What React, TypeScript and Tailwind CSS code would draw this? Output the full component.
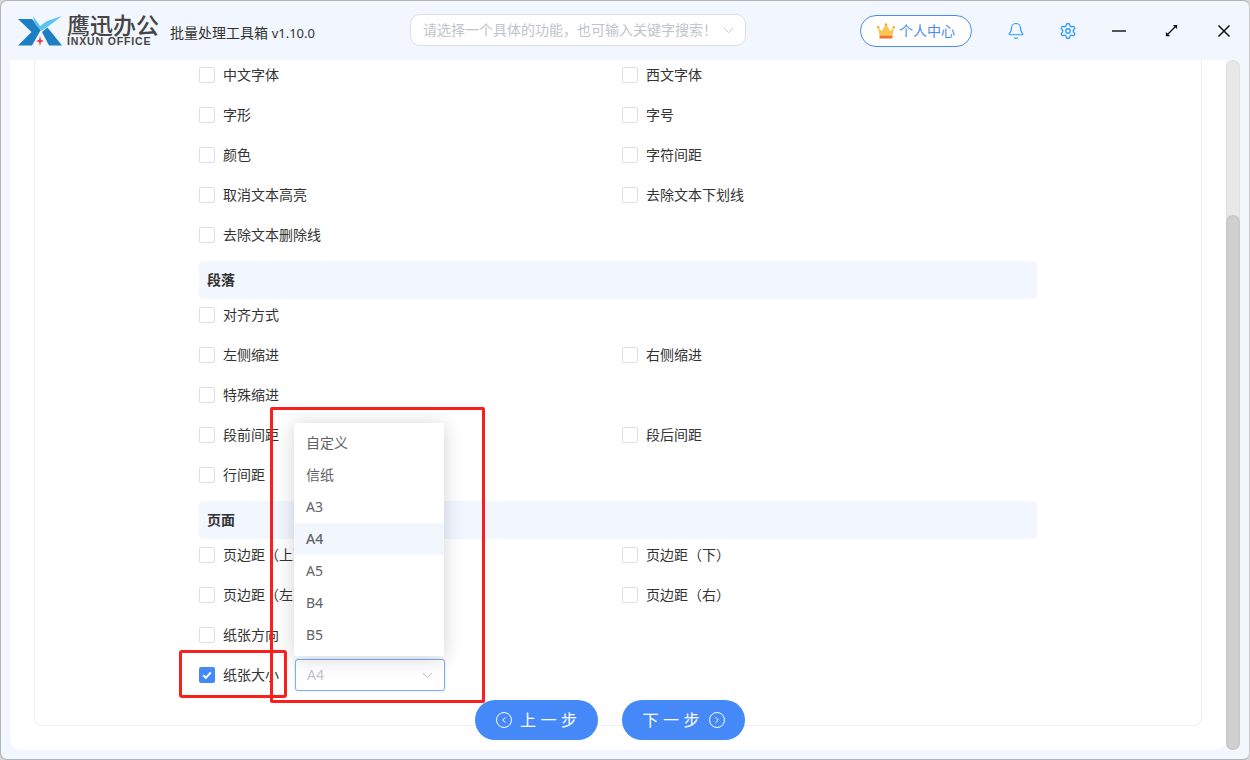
import React from "react";
import { Bell, Settings, ChevronDown, ChevronLeft, ChevronRight } from "lucide-react";

const font = "font-['Noto_Sans','Noto_Sans_CJK_SC',sans-serif]";

function Box({ checked }: { checked?: boolean }) {
  if (checked) {
    return (
      <span className="w-4 h-4 rounded-[2px] bg-[#4589f8] flex items-center justify-center shrink-0">
        <svg width="12" height="12" viewBox="0 0 12 12" fill="none">
          <path d="M2.2 6.2 L4.9 8.8 L9.8 3.4" stroke="#fff" strokeWidth="2" />
        </svg>
      </span>
    );
  }
  return <span className="w-4 h-4 rounded-[2px] border border-[#dcdfe6] bg-white shrink-0" />;
}

function Item({ label }: { label: string }) {
  return (
    <div className="flex items-center gap-2">
      <Box />
      <span className="text-[14px] text-[#333] mb-[2px]">{label}</span>
    </div>
  );
}

function Row({ a, b }: { a: string; b?: string }) {
  return (
    <div className="h-10 grid grid-cols-[423px_1fr] items-center">
      <Item label={a} />
      {b ? <Item label={b} /> : null}
    </div>
  );
}

function Section({ title }: { title: string }) {
  return (
    <div className="h-[38px] mt-[6px] -mb-1 w-[838px] bg-[#f2f6fe] rounded-[4px] flex items-center pl-2 relative z-0">
      <span className="text-[14px] font-bold text-[#333] mb-[2px]">{title}</span>
    </div>
  );
}

const options = ["自定义", "信纸", "A3", "A4", "A5", "B4", "B5"];

function Logo() {
  return (
    <div className="flex items-center">
      <svg width="44" height="32" viewBox="0 0 44 32" className="shrink-0">
        <path d="M0 4 H14 L23 14.5 L14 30.5 H0 L13.5 17 Z" fill="#1c7fc4" />
        <path d="M15 1 L22 11 L29 6 L44 1 L30 11.5 L23 16 L17 9 Z" fill="#5cc3ee" />
        <path d="M24 17 L29.5 12.5 L44 30.5 H31 Z" fill="#1c7fc4" />
        <path d="M22 21 L23 25 L26 26 L23 27 L22 31 L21 27 L18 26 L21 25 Z" fill="#e8343c" />
      </svg>
      <div className="ml-[5px] mb-[2px] flex flex-col w-[92px]">
        <span className="text-[23px] leading-[22px] font-medium text-[#454545] font-['Noto_Sans_CJK_SC',sans-serif]">鹰迅办公</span>
        <span className="text-[10.5px] leading-[10px] font-bold tracking-[0.85px] whitespace-nowrap text-[#454545] mt-[1px] font-['Liberation_Sans',sans-serif]">INXUN OFFICE</span>
      </div>
    </div>
  );
}

function Crown() {
  return (
    <svg width="18" height="16" viewBox="0 0 18 16" className="shrink-0">
      <path d="M1 4.5 L4.8 8 L9 1 L13.2 8 L17 4.5 L15.5 12.5 H2.5 Z" fill="#fcc64f" />
      <circle cx="1.2" cy="4.2" r="1.2" fill="#f5a623" />
      <circle cx="16.8" cy="4.2" r="1.2" fill="#f5a623" />
      <circle cx="9" cy="1.4" r="1.2" fill="#f5a623" />
      <rect x="2.5" y="12.5" width="13" height="3" fill="#f0712c" />
    </svg>
  );
}

export default function App() {
  return (
    <div className={`${font} relative w-[1250px] h-[760px] overflow-hidden bg-[#d8d8d8]`}>
      <div className="w-full h-full rounded-[7px] border border-[#b4b4b4] border-r-[#c8c8c8] bg-[#f2f6fe] flex flex-col">
        <header className="h-[59px] shrink-0 flex items-center pl-[17px]">
          <Logo />
          <span className="ml-[11px] mt-[5px] text-[14px] text-[#333] w-[146px] whitespace-nowrap">
            批量处理工具箱 <span className="text-[13px]">v1.10.0</span>
          </span>
          <div className="ml-[94px] w-[336px] h-8 bg-white border border-[#dcdfe6] rounded-[10px] flex items-center justify-between pl-3 pr-[8px] -mt-[1px]">
            <span className="text-[14px] text-[#c0c4cc] whitespace-nowrap mb-[2px]">请选择一个具体的功能，也可输入关键字搜索！</span>
            <ChevronDown size={17} strokeWidth={1.2} className="text-[#b8bcc4]" />
          </div>
          <button className="ml-[114px] w-28 h-8 rounded-full border border-[#4a8cf7] bg-white flex items-center justify-center gap-1 text-[14px] text-[#4a8cf7]">
            <Crown />
            <span className="mb-[1px]">个人中心</span>
          </button>
          <Bell size={18} strokeWidth={1.6} className="ml-[35px] text-[#2f9bff]" />
          <Settings size={18} strokeWidth={1.8} className="ml-[34px] text-[#2f9bff]" />
          <span className="ml-[35px] w-[14px] h-[2px] bg-[#555]" />
          <svg width="15" height="15" viewBox="0 0 16 16" className="ml-[38px]" fill="none">
            <path d="M3 13 L13 3" stroke="#111" strokeWidth="1.4" />
            <path d="M9.5 2 H14 V6.5 Z" fill="#111" />
            <path d="M2 9.5 V14 H6.5 Z" fill="#111" />
          </svg>
          <svg width="14" height="14" viewBox="0 0 14 14" className="ml-[38px]" fill="none">
            <path d="M1.5 1.5 L12.5 12.5 M12.5 1.5 L1.5 12.5" stroke="#111" strokeWidth="1.5" />
          </svg>
        </header>
        <div className="flex-1 flex min-h-0 pl-[9px] pb-[9px]">
          <main className="w-[1216px] bg-white rounded-bl-[10px] rounded-br-[10px] overflow-hidden pl-6 pr-6 pb-6">
            <div className="h-full border border-t-0 border-[#ebeef5] rounded-b-[8px] overflow-hidden pl-[164px]">
              <div className="-mt-[5px]">
                <Row a="中文字体" b="西文字体" />
                <Row a="字形" b="字号" />
                <Row a="颜色" b="字符间距" />
                <Row a="取消文本高亮" b="去除文本下划线" />
                <Row a="去除文本删除线" />
                <Section title="段落" />
                <Row a="对齐方式" />
                <Row a="左侧缩进" b="右侧缩进" />
                <Row a="特殊缩进" />
                <Row a="段前间距" b="段后间距" />
                <Row a="行间距" />
                <Section title="页面" />
                <Row a="页边距（上）" b="页边距（下）" />
                <Row a="页边距（左）" b="页边距（右）" />
                <Row a="纸张方向" />
                <div className="h-10 flex items-center">
                  <div className="flex items-center gap-2 w-[96px] shrink-0">
                    <Box checked />
                    <span className="text-[14px] text-[#333] mb-[2px]">纸张大小</span>
                  </div>
                  <div className="w-[150px] h-8 bg-white border border-[#7cb0f8] rounded-[3px] shadow-[0_0_2px_rgba(69,137,248,0.35)] flex items-center justify-between pl-[11px] pr-2 text-[14px] text-[#c0c4cc]">
                    <span className="mb-[2px]">A4</span>
                    <ChevronDown size={17} strokeWidth={1.2} className="text-[#b0b4bc]" />
                  </div>
                </div>
              </div>
            </div>
          </main>
          <div className="w-[14px] h-full bg-[#e8e8e8] rounded-full relative shadow-[inset_0_0_3px_rgba(0,0,0,0.08)]">
            <div className="absolute left-0 right-0 bottom-0 h-[535px] bg-[#d0d0d0] rounded-full shadow-[inset_0_0_3px_rgba(0,0,0,0.1)]" />
          </div>
        </div>
      </div>

      <div className="absolute left-[294px] top-[423px] w-[150px] h-[233px] bg-white rounded-[2px] py-1 shadow-[0_2px_20px_rgba(0,0,0,0.18)] text-[14px] text-[#606266]">
        {options.map((o) => (
          <div key={o} className={`h-8 flex items-center pl-3 ${o === "A4" ? "bg-[#f2f7fd] font-medium" : ""}`}>
            <span className="mb-[2px]">{o}</span>
          </div>
        ))}
      </div>

      <div className="absolute left-[270px] top-[407px] w-[215px] h-[296px] border-[3px] border-[#f8201c] rounded-[2px] pointer-events-none" />
      <div className="absolute left-[179px] top-[650px] w-[108px] h-[48px] border-[3px] border-[#f8201c] rounded-[3px] pointer-events-none" />

      <div className="absolute left-[475px] top-[700px] flex gap-6 text-white text-[16px]">
        <button className="w-[123px] h-10 rounded-full bg-[#4589f8] flex items-center justify-center gap-2">
          <span className="w-4 h-4 rounded-full border-[1.5px] border-white flex items-center justify-center">
            <ChevronLeft size={10} strokeWidth={2.4} />
          </span>
          <span className="tracking-[4.5px] -mr-[4.5px]">上一步</span>
        </button>
        <button className="w-[123px] h-10 rounded-full bg-[#4589f8] flex items-center justify-center gap-2">
          <span className="tracking-[4.5px] -mr-[4.5px]">下一步</span>
          <span className="ml-[1px] w-4 h-4 rounded-full border-[1.5px] border-white flex items-center justify-center">
            <ChevronRight size={10} strokeWidth={2.4} />
          </span>
        </button>
      </div>
    </div>
  );
}
